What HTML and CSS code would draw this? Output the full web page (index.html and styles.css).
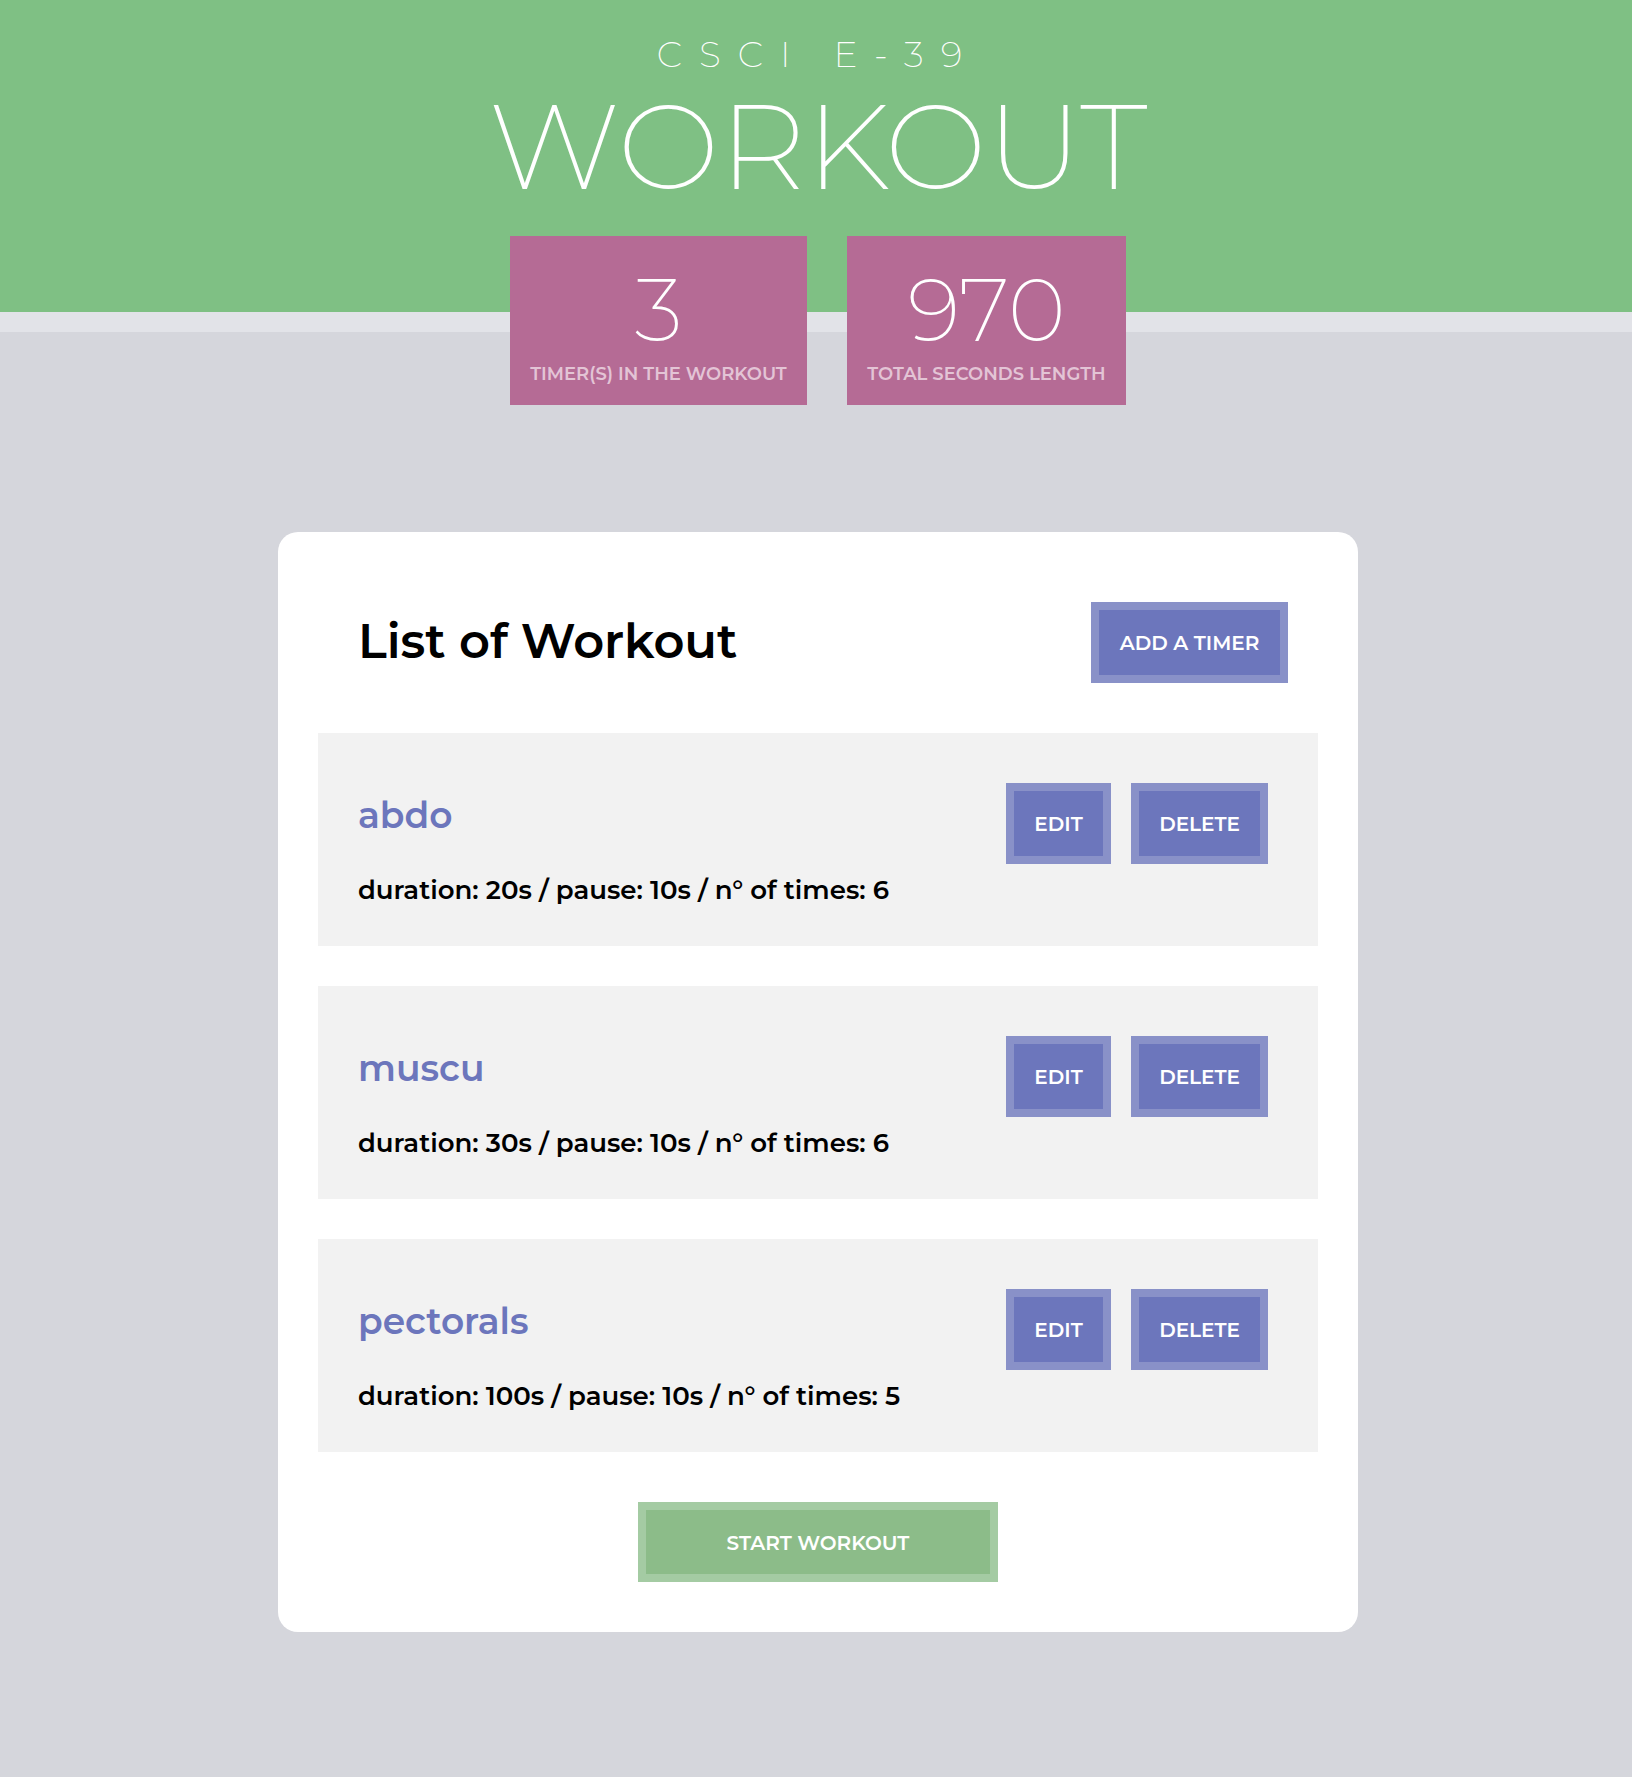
FILE: index.html
```html
<!DOCTYPE html>
<html lang="en">
<head>
<meta charset="utf-8">
<meta name="viewport" content="width=device-width, initial-scale=1">
<title>Workout</title>
<link rel="stylesheet" href="styles.css">
</head>
<body>
<header class="header">
  <p class="course">CSCI E-39</p>
  <h1 class="brand">WORKOUT</h1>
  <div class="stats">
    <div class="stat stat-timers">
      <span class="stat-value">3</span>
      <span class="stat-label">TIMER(S) IN THE WORKOUT</span>
    </div>
    <div class="stat stat-length">
      <span class="stat-value">970</span>
      <span class="stat-label">TOTAL SECONDS LENGTH</span>
    </div>
  </div>
</header>
<main class="main">
  <section class="card">
    <div class="card-head">
      <h2 class="card-title">List of Workout</h2>
      <button class="button button-add" type="button">ADD A TIMER</button>
    </div>
    <ul class="timers">
      <li class="timer">
        <div class="timer-info">
          <h3 class="timer-name">abdo</h3>
          <p class="timer-detail">duration: 20s / pause: 10s / n° of times: 6</p>
        </div>
        <div class="timer-actions">
          <button class="button button-edit" type="button">EDIT</button>
          <button class="button button-delete" type="button">DELETE</button>
        </div>
      </li>
      <li class="timer">
        <div class="timer-info">
          <h3 class="timer-name">muscu</h3>
          <p class="timer-detail">duration: 30s / pause: 10s / n° of times: 6</p>
        </div>
        <div class="timer-actions">
          <button class="button button-edit" type="button">EDIT</button>
          <button class="button button-delete" type="button">DELETE</button>
        </div>
      </li>
      <li class="timer">
        <div class="timer-info">
          <h3 class="timer-name">pectorals</h3>
          <p class="timer-detail">duration: 100s / pause: 10s / n° of times: 5</p>
        </div>
        <div class="timer-actions">
          <button class="button button-edit" type="button">EDIT</button>
          <button class="button button-delete" type="button">DELETE</button>
        </div>
      </li>
    </ul>
    <button class="button button-start" type="button">START WORKOUT</button>
  </section>
</main>
</body>
</html>
```
FILE: styles.css
```css
* {
  box-sizing: border-box;
}

body {
  margin: 0;
  background: #d5d6dc;
  color: #000;
  font-family: Montserrat, Inter, sans-serif;
  font-weight: 600;
}

h1, h2, h3, p, ul {
  margin: 0;
  padding: 0;
}

.header {
  display: flex;
  flex-direction: column;
  align-items: center;
  padding: 30px 0 76px 4px;
  border-bottom: 20px solid #e2e3e8;
  background: #7fc084;
  color: #fff;
}

.course {
  font-size: 36px;
  font-weight: 200;
  line-height: 48px;
  letter-spacing: 17px;
}

.brand {
  margin-top: 8px;
  font-size: 121px;
  font-weight: 200;
  line-height: 120px;
}

.stats {
  display: flex;
  flex-wrap: wrap;
  justify-content: center;
  gap: 40px;
  margin: 30px 0 -169px;
}

.stat {
  display: flex;
  flex-direction: column;
  align-items: center;
  padding: 20px;
  background: #b56b95;
}

.stat-timers {
  min-width: 297px;
}

.stat-length {
  min-width: 279px;
}

.stat-value {
  font-size: 88px;
  font-weight: 200;
  line-height: 108px;
}

.stat-label {
  color: #e3c4d5;
  font-size: 18px;
  line-height: 21px;
}

.main {
  padding: 200px 0 145px 4px;
}

.card {
  display: flex;
  flex-direction: column;
  max-width: 1080px;
  margin: 0 auto;
  padding: 40px 40px 50px;
  border-radius: 20px;
  background: #fff;
}

.card-head {
  display: flex;
  align-items: flex-start;
  justify-content: space-between;
  padding: 30px 30px 50px 40px;
}

.card-title {
  font-size: 48px;
  font-weight: 600;
  line-height: 78px;
}

.timers {
  display: flex;
  flex-direction: column;
  gap: 40px;
  list-style: none;
}

.timer {
  display: flex;
  align-items: flex-start;
  justify-content: space-between;
  padding: 50px 50px 40px 40px;
  background: #f2f2f2;
}

.timer-name {
  color: #6c76bc;
  font-size: 36px;
  font-weight: 600;
  line-height: 64px;
}

.timer-detail {
  margin-top: 27px;
  font-size: 26px;
  line-height: 32px;
}

.timer-actions {
  display: flex;
  gap: 20px;
}

.button {
  padding: 21px 20px 19px;
  border: 8px solid #8991c8;
  background: #6c76bc;
  color: #fff;
  font: inherit;
  font-size: 20px;
  line-height: 25px;
  cursor: pointer;
}

.button-add {
  min-width: 197px;
}

.button-edit {
  min-width: 105px;
}

.button-delete {
  min-width: 137px;
}

.button-start {
  align-self: center;
  width: 360px;
  max-width: 100%;
  margin-top: 50px;
  border-color: #a4cba3;
  background: #8cbc89;
  line-height: 24px;
}
```
